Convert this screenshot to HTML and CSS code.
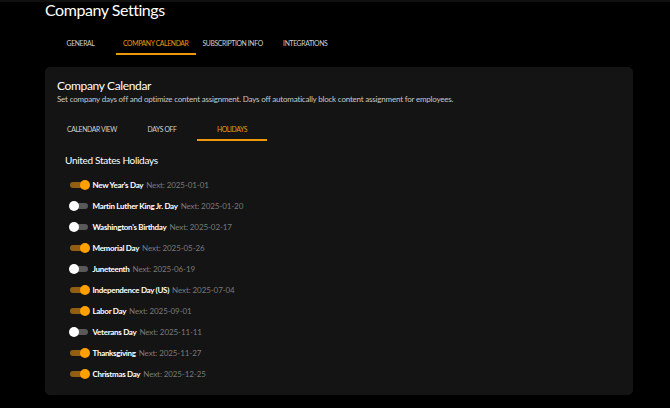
FILE: index.html
```html
<!DOCTYPE html>
<html lang="en">
<head>
<meta charset="utf-8">
<title>Company Settings</title>
<link rel="stylesheet" href="styles.css">
</head>
<body>
<div class="page">
  <h1 class="page-title">Company Settings</h1>
  <nav class="tabs top-tabs">
    <div class="tab">GENERAL</div>
    <div class="tab active">COMPANY CALENDAR</div>
    <div class="tab">SUBSCRIPTION INFO</div>
    <div class="tab">INTEGRATIONS</div>
  </nav>
  <section class="card">
    <h2 class="card-title">Company Calendar</h2>
    <p class="card-sub">Set company days off and optimize content assignment. Days off automatically block content assignment for employees.</p>
    <nav class="tabs inner-tabs">
      <div class="tab">CALENDAR VIEW</div>
      <div class="tab">DAYS OFF</div>
      <div class="tab active">HOLIDAYS</div>
    </nav>
    <h3 class="section-title">United States Holidays</h3>
    <ul class="holidays">
      <li class="row"><span class="switch on"><span class="thumb"></span></span><span class="name">New Year's Day</span><span class="next">Next: 2025-01-01</span></li>
      <li class="row"><span class="switch"><span class="thumb"></span></span><span class="name">Martin Luther King Jr. Day</span><span class="next">Next: 2025-01-20</span></li>
      <li class="row"><span class="switch"><span class="thumb"></span></span><span class="name">Washington's Birthday</span><span class="next">Next: 2025-02-17</span></li>
      <li class="row"><span class="switch on"><span class="thumb"></span></span><span class="name">Memorial Day</span><span class="next">Next: 2025-05-26</span></li>
      <li class="row"><span class="switch"><span class="thumb"></span></span><span class="name">Juneteenth</span><span class="next">Next: 2025-06-19</span></li>
      <li class="row"><span class="switch on"><span class="thumb"></span></span><span class="name">Independence Day (US)</span><span class="next">Next: 2025-07-04</span></li>
      <li class="row"><span class="switch on"><span class="thumb"></span></span><span class="name">Labor Day</span><span class="next">Next: 2025-09-01</span></li>
      <li class="row"><span class="switch"><span class="thumb"></span></span><span class="name">Veterans Day</span><span class="next">Next: 2025-11-11</span></li>
      <li class="row"><span class="switch on"><span class="thumb"></span></span><span class="name">Thanksgiving</span><span class="next">Next: 2025-11-27</span></li>
      <li class="row"><span class="switch on"><span class="thumb"></span></span><span class="name">Christmas Day</span><span class="next">Next: 2025-12-25</span></li>
    </ul>
  </section>
</div>
</body>
</html>
```

FILE: styles.css
```css
* { box-sizing: border-box; }

html, body {
  margin: 0;
  background: #000;
}

body {
  font-family: Lato, "Noto Sans", sans-serif;
  color: #fff;
  border-top: 2px solid #101010;
}

.page {
  padding: 0 37px 0 45px;
  margin-top: -2px;
}

.page-title {
  margin: 0;
  font-size: 16px;
  line-height: 20px;
  letter-spacing: -0.45px;
  font-weight: 400;
  color: #fff;
}

.tabs {
  display: flex;
}

.top-tabs {
  margin-top: 11px;
}

.tab {
  height: 24px;
  min-width: 71px;
  padding: 2px 7px 0;
  display: flex;
  align-items: center;
  justify-content: center;
  font-size: 6.8px;
  letter-spacing: -0.35px;
  font-weight: 400;
  color: #d2d2d2;
  border-bottom: 2px solid transparent;
  white-space: nowrap;
}

.tab.active {
  color: #ec9a0c;
  border-bottom-color: #ec9a0c;
}

.inner-tabs .tab {
  min-width: 70px;
}

.card {
  margin-top: 12px;
  background: #141414;
  border-radius: 5px;
  padding: 11px 12px;
}

.card-title {
  margin: 0;
  font-size: 12px;
  line-height: 16px;
  letter-spacing: -0.35px;
  font-weight: 400;
}

.card-sub {
  margin: 0;
  font-size: 8px;
  line-height: 11px;
  letter-spacing: -0.2px;
  color: #c8c8c8;
}

.inner-tabs {
  margin-top: 12px;
}

.section-title {
  margin: 12px 0 0 8px;
  font-size: 10px;
  line-height: 14px;
  letter-spacing: -0.3px;
  font-weight: 400;
}

.holidays {
  list-style: none;
  margin: 7px 0 0 12px;
  padding: 0;
}

.row {
  height: 21px;
  display: flex;
  align-items: center;
  font-size: 8px;
}

.switch {
  flex: none;
  width: 18px;
  height: 6px;
  margin: 0 4.5px 0 1px;
  border-radius: 3px;
  background: #595959;
  display: flex;
  align-items: center;
  justify-content: flex-start;
}

.switch.on {
  background: #925e14;
  justify-content: flex-end;
}

.thumb {
  flex: none;
  width: 10px;
  height: 10px;
  margin: 0 -1px;
  border-radius: 50%;
  background: #fff;
}

.switch.on .thumb {
  background: #ffa000;
  margin-right: -1.5px;
}

.name {
  font-weight: 700;
  letter-spacing: -0.3px;
  color: #fff;
}

.next {
  margin-left: 3px;
  letter-spacing: -0.1px;
  color: #7a7a7a;
}
```
